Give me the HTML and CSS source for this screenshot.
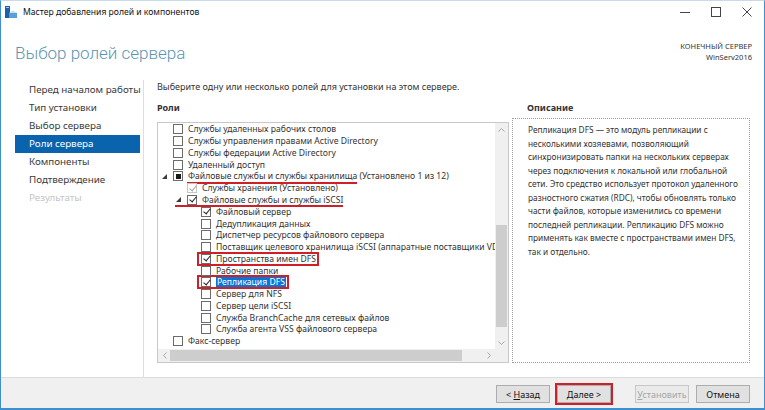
FILE: index.html
```html
<!DOCTYPE html>
<html lang="ru">
<head>
    <meta charset="UTF-8">
    <title>Мастер добавления ролей и компонентов</title>
    <link rel="stylesheet" href="styles.css">
</head>
<body>
<div class="window">
    <div class="titlebar">
        <svg class="app-icon" width="14" height="14" viewBox="0 0 14 14">
            <rect x="1" y="1" width="5" height="12" fill="#1d5fa8"/>
            <rect x="2" y="2" width="3" height="1" fill="#9cc8ee"/>
            <path d="M5 8 L13 8 L13 13 L5 13 Z" fill="#5c9fd8"/>
            <path d="M5 8 L9 5.5 L13 8 Z" fill="#c4def3"/>
        </svg>
        <span class="title-text">Мастер добавления ролей и компонентов</span>
        <div class="win-controls">
            <span class="ctl"><svg width="10" height="10"><line x1="0" y1="5.5" x2="10" y2="5.5" stroke="#444"/></svg></span>
            <span class="ctl"><svg width="10" height="10"><rect x="0.5" y="0.5" width="9" height="9" fill="none" stroke="#444"/></svg></span>
            <span class="ctl"><svg width="10" height="10"><path d="M0.5 0.5 L9.5 9.5 M9.5 0.5 L0.5 9.5" stroke="#444"/></svg></span>
        </div>
    </div>

    <div class="header">
        <h1>Выбор ролей сервера</h1>
        <div class="target">
            <div>КОНЕЧНЫЙ СЕРВЕР</div>
            <div>WinServ2016</div>
        </div>
    </div>

    <div class="body">
        <ul class="steps">
            <li>Перед началом работы</li>
            <li>Тип установки</li>
            <li>Выбор сервера</li>
            <li class="active">Роли сервера</li>
            <li>Компоненты</li>
            <li>Подтверждение</li>
            <li class="disabled">Результаты</li>
        </ul>

        <div class="content">
            <p class="intro">Выберите одну или несколько ролей для установки на этом сервере.</p>
            <div class="columns">
                <div class="roles">
                    <h2>Роли</h2>
                    <div class="tree">
                        <div class="tree-list">
                            <div class="node l1"><span class="exp"></span><span class="cb"></span><span class="lbl">Службы удаленных рабочих столов</span></div>
                            <div class="node l1"><span class="exp"></span><span class="cb"></span><span class="lbl">Службы управления правами Active Directory</span></div>
                            <div class="node l1"><span class="exp"></span><span class="cb"></span><span class="lbl">Службы федерации Active Directory</span></div>
                            <div class="node l1"><span class="exp"></span><span class="cb"></span><span class="lbl">Удаленный доступ</span></div>
                            <div class="node l1"><span class="exp open"></span><span class="cb part"></span><span class="lbl"><span class="under">Файловые службы и службы хранилища</span> (Установлено 1 из 12)</span></div>
                            <div class="node l2"><span class="exp"></span><span class="cb on dis"></span><span class="lbl">Службы хранения (Установлено)</span></div>
                            <div class="node l2"><span class="group under"><span class="exp open"></span><span class="cb on"></span><span class="lbl">Файловые службы и службы iSCSI</span></span></div>
                            <div class="node l3"><span class="exp"></span><span class="cb on"></span><span class="lbl">Файловый сервер</span></div>
                            <div class="node l3"><span class="exp"></span><span class="cb"></span><span class="lbl">Дедупликация данных</span></div>
                            <div class="node l3"><span class="exp"></span><span class="cb"></span><span class="lbl">Диспетчер ресурсов файлового сервера</span></div>
                            <div class="node l3"><span class="exp"></span><span class="cb"></span><span class="lbl">Поставщик целевого хранилища iSCSI (аппаратные поставщики VDS и VSS)</span></div>
                            <div class="node l3"><span class="exp"></span><span class="group boxed"><span class="cb on"></span><span class="lbl">Пространства имен DFS</span></span></div>
                            <div class="node l3"><span class="exp"></span><span class="cb"></span><span class="lbl">Рабочие папки</span></div>
                            <div class="node l3"><span class="exp"></span><span class="group boxed"><span class="cb on"></span><span class="lbl sel">Репликация DFS</span></span></div>
                            <div class="node l3"><span class="exp"></span><span class="cb"></span><span class="lbl">Сервер для NFS</span></div>
                            <div class="node l3"><span class="exp"></span><span class="cb"></span><span class="lbl">Сервер цели iSCSI</span></div>
                            <div class="node l3"><span class="exp"></span><span class="cb"></span><span class="lbl">Служба BranchCache для сетевых файлов</span></div>
                            <div class="node l3"><span class="exp"></span><span class="cb"></span><span class="lbl">Служба агента VSS файлового сервера</span></div>
                            <div class="node l1"><span class="exp"></span><span class="cb"></span><span class="lbl">Факс-сервер</span></div>
                        </div>
                        <div class="vscroll">
                            <span class="arr"><svg width="7" height="4"><polyline points="0.5,3.5 3.5,0.5 6.5,3.5" fill="none" stroke="#a8a8a8"/></svg></span>
                            <span class="thumb"></span>
                            <span class="arr last"><svg width="7" height="4"><polyline points="0.5,0.5 3.5,3.5 6.5,0.5" fill="none" stroke="#a8a8a8"/></svg></span>
                        </div>
                        <div class="hscroll">
                            <span class="arr"><svg width="4" height="7"><polyline points="3.5,0.5 0.5,3.5 3.5,6.5" fill="none" stroke="#a8a8a8"/></svg></span>
                            <span class="thumb"></span>
                            <span class="arr last"><svg width="4" height="7"><polyline points="0.5,0.5 3.5,3.5 0.5,6.5" fill="none" stroke="#a8a8a8"/></svg></span>
                        </div>
                        <div class="corner"></div>
                    </div>
                </div>

                <div class="description">
                    <h2>Описание</h2>
                    <div class="desc-box">
                        Репликация DFS — это модуль репликации с<br>
                        несколькими хозяевами, позволяющий<br>
                        синхронизировать папки на нескольких серверах<br>
                        через подключения к локальной или глобальной<br>
                        сети. Это средство использует протокол удаленного<br>
                        разностного сжатия (RDC), чтобы обновлять только<br>
                        части файлов, которые изменились со времени<br>
                        последней репликации. Репликацию DFS можно<br>
                        применять как вместе с пространствами имен DFS,<br>
                        так и отдельно.
                    </div>
                </div>
            </div>
        </div>
    </div>

    <div class="footer">
        <button class="btn">&lt; <u>Н</u>азад</button>
        <button class="btn next"><u>Д</u>алее &gt;</button>
        <button class="btn" disabled><u>У</u>становить</button>
        <button class="btn">Отмена</button>
    </div>
</div>
</body>
</html>
```

FILE: styles.css
```css
* {
    margin: 0;
    padding: 0;
    box-sizing: border-box;
}

body {
    font-family: "Noto Sans", "Open Sans", sans-serif;
    font-size: 9px;
    color: #333;
    background: #fff;
    overflow: hidden;
}

.window {
    width: 765px;
    height: 410px;
    display: flex;
    flex-direction: column;
    border: 1px solid #3d8fcf;
    border-top-color: #c9dbea;
    border-bottom-width: 2px;
    background: #fff;
}

/* title bar */
.titlebar {
    height: 22px;
    display: flex;
    align-items: center;
    padding-left: 3px;
    flex: none;
}

.app-icon {
    margin-right: 5px;
}

.title-text {
    font-size: 8.6px;
    color: #111;
}

.win-controls {
    margin-left: auto;
    margin-right: 2px;
    display: flex;
}

.ctl {
    width: 31px;
    display: flex;
    justify-content: center;
}

/* header */
.header {
    height: 55px;
    flex: none;
    display: flex;
    justify-content: space-between;
    padding: 18px 12px 0 14px;
}

.header h1 {
    font-family: Roboto, "Open Sans", sans-serif;
    font-weight: 300;
    font-size: 17px;
    line-height: 24px;
    color: #5b95b2;
}

.target {
    text-align: right;
    font-size: 7.5px;
    line-height: 11px;
    color: #333;
}

/* body */
.body {
    flex: 1;
    display: flex;
    min-height: 0;
}

.steps {
    list-style: none;
    width: 143px;
    flex: none;
    margin-top: 2px;
    padding: 1px 0 0 14px;
    border-right: 1px solid #dedede;
}

.steps li {
    height: 18px;
    line-height: 18px;
    width: 125px;
    padding-left: 14px;
    font-size: 9.8px;
    white-space: nowrap;
    color: #3a3a3a;
}

.steps li.active {
    background: #0a64ad;
    color: #fff;
}

.steps li.disabled {
    color: #c4c4c4;
}

.content {
    flex: 1;
    padding: 3px 13px 0 13px;
}

.intro {
    line-height: 12px;
}

.columns {
    margin-top: 9px;
    display: flex;
}

.columns h2 {
    font-size: 9px;
    font-weight: bold;
    line-height: 12px;
    color: #333;
}

.roles {
    width: 352px;
    flex: none;
}

.roles h2 {
    margin-bottom: 8px;
}

/* tree view */
.tree {
    height: 241px;
    border: 1px solid #c8c8c8;
    display: grid;
    grid-template-columns: 1fr 13px;
    grid-template-rows: 1fr 13px;
}

.tree-list {
    overflow: hidden;
    padding-top: 0.5px;
    font-size: 8.6px;
    color: #333;
}

.node {
    display: flex;
    align-items: center;
    height: 11.78px;
    white-space: nowrap;
    padding-left: 4px;
}

.node.l2 {
    padding-left: 18px;
}

.node.l3 {
    padding-left: 32px;
}

.group {
    display: flex;
    align-items: center;
    height: 100%;
}

.exp {
    width: 11px;
    height: 100%;
    flex: none;
    position: relative;
}

.exp.open::before {
    content: "";
    position: absolute;
    left: 0;
    top: 3px;
    border-left: 5px solid transparent;
    border-bottom: 5px solid #3a3a3a;
}

.cb {
    width: 10px;
    height: 10px;
    flex: none;
    border: 1px solid #6c6c6c;
    background: #fff;
    margin-right: 5px;
    position: relative;
}

.cb.on::after {
    content: "";
    position: absolute;
    left: 2.5px;
    top: -0.5px;
    width: 3px;
    height: 6px;
    border: solid #1f1f1f;
    border-width: 0 1.6px 1.6px 0;
    transform: rotate(40deg);
}

.cb.part::after {
    content: "";
    position: absolute;
    left: 1.5px;
    top: 1.5px;
    width: 5px;
    height: 5px;
    background: #1a1a1a;
}

.cb.dis {
    border-color: #c6c6c6;
}

.cb.dis::after {
    border-color: #a3a3a3;
}

.lbl.sel {
    background: #0a74d4;
    color: #fff;
    padding: 0 1px;
}

/* red annotations */
.under {
    position: relative;
}

.under::after {
    content: "";
    position: absolute;
    left: -1px;
    right: 0;
    bottom: -2px;
    height: 2px;
    background: #cf2029;
}

.group.under::after {
    bottom: -1px;
}

.boxed {
    height: 10px;
    margin-left: -2px;
    padding: 0 1px 0 2px;
    outline: 2px solid #cf2029;
}

/* scrollbars */
.vscroll, .hscroll, .corner {
    background: #f0f0f0;
}

.vscroll {
    display: flex;
    flex-direction: column;
}

.hscroll {
    display: flex;
}

.arr {
    width: 13px;
    height: 13px;
    flex: none;
    display: flex;
    align-items: center;
    justify-content: center;
}

.arr.last {
    margin: auto 0 0 0;
}

.hscroll .arr.last {
    margin: 0 0 0 auto;
}

.vscroll .thumb {
    margin: 89px 1px 0;
    height: 102px;
    background: #cdcdcd;
}

.hscroll .thumb {
    margin: 1px 0 1px -1px;
    width: 292px;
    background: #cdcdcd;
}

/* description */
.description {
    width: 238px;
    flex: none;
    margin-left: 3px;
}

.description h2 {
    padding-left: 15px;
    margin-bottom: 4px;
}

.desc-box {
    height: 245px;
    border: 1px dotted #9c9c9c;
    padding: 4px 0 0 15px;
    font-size: 8.3px;
    line-height: 13.5px;
    white-space: nowrap;
    overflow: hidden;
    color: #333;
}

/* footer buttons */
.footer {
    height: 31px;
    flex: none;
    border-top: 1px solid #dcdcdc;
    background: #f0f0f0;
    display: flex;
    justify-content: flex-end;
    align-items: flex-start;
    padding: 7px 14px 0 0;
}

.btn {
    width: 54px;
    height: 18px;
    margin-left: 7px;
    font-family: inherit;
    font-size: 9px;
    color: #111;
    background: #e1e1e1;
    border: 1px solid #adadad;
}

.btn.next {
    outline: 2px solid #cf2029;
    margin-right: 17px;
}

.btn:disabled {
    color: #a6a6a6;
    background: #eaeaea;
    border-color: #c8c8c8;
}
```
